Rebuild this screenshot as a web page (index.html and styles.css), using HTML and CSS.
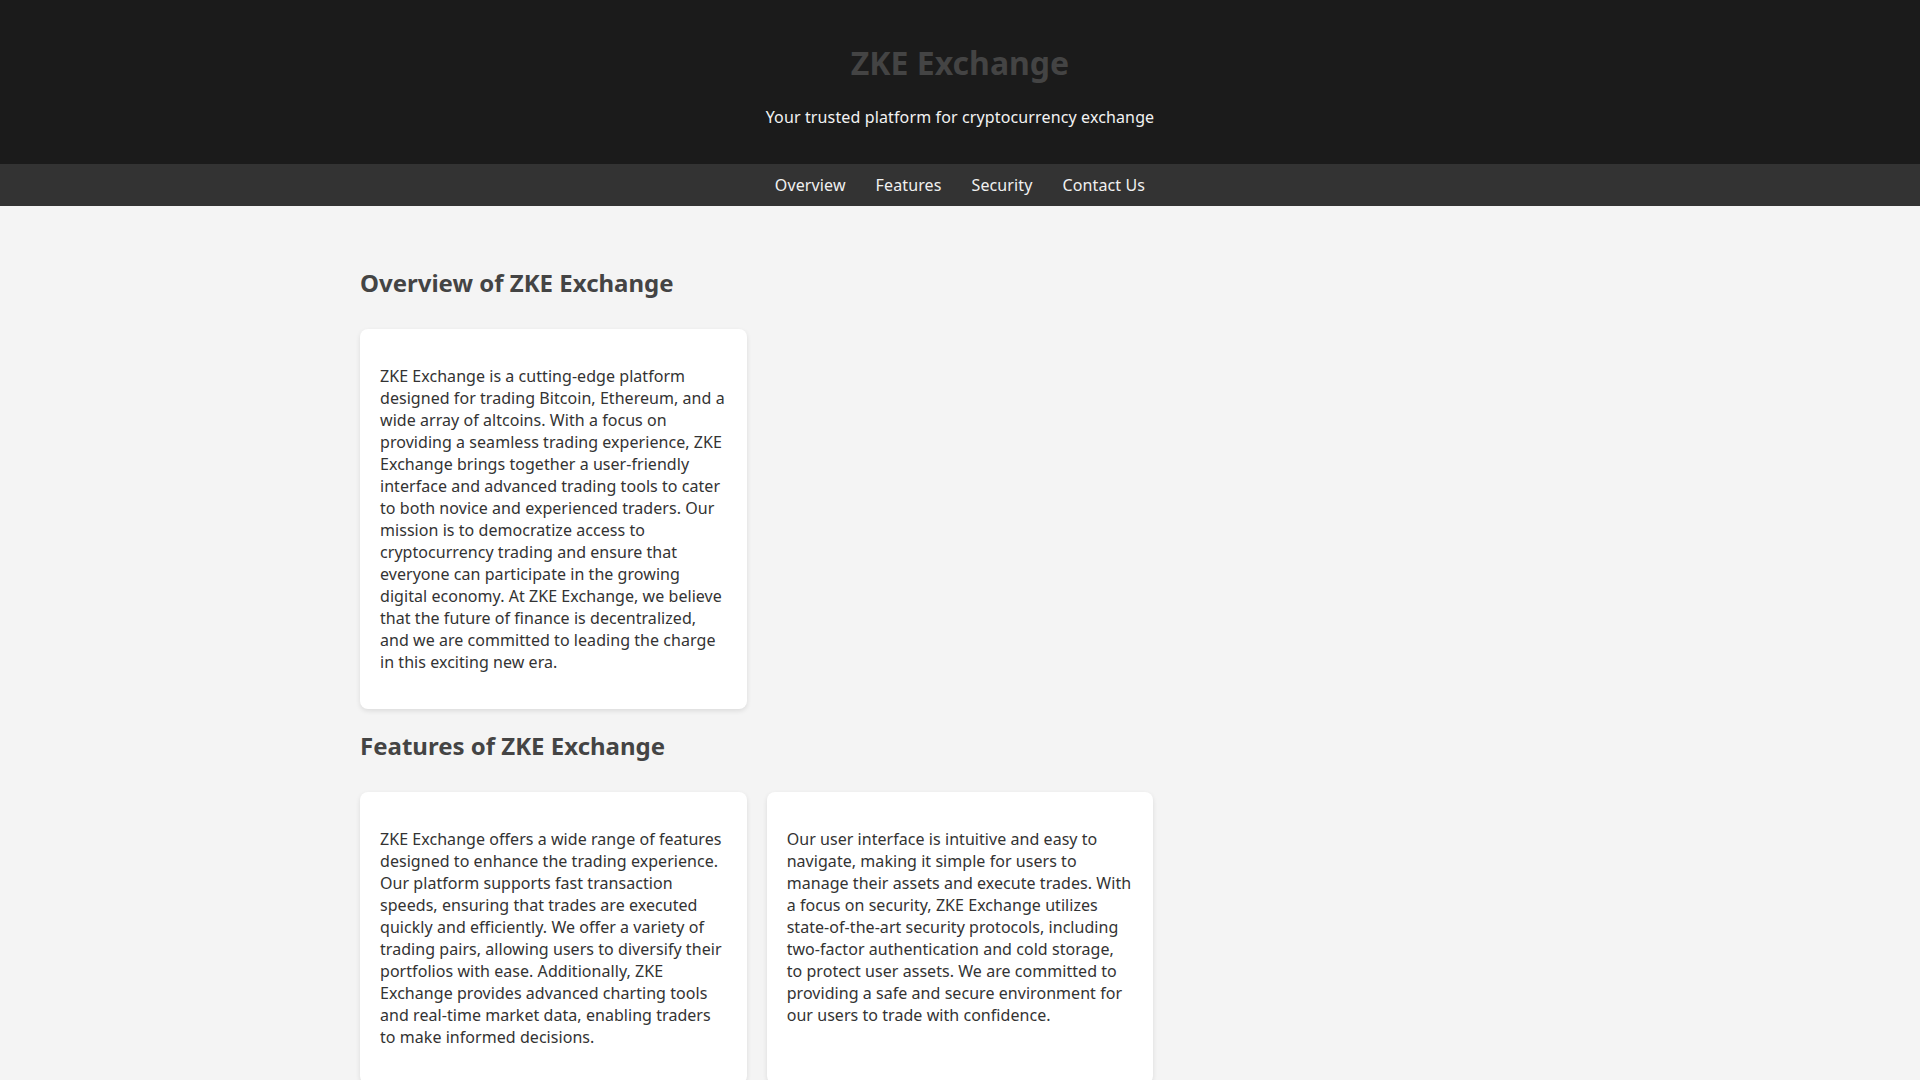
FILE: index.html
```html
<!DOCTYPE html>
<html lang="en">
<head>
<meta charset="utf-8">
<title>ZKE Exchange</title>
<link rel="stylesheet" href="styles.css">
</head>
<body>
<header class="site-header">
  <h1 class="site-title">ZKE Exchange</h1>
  <p class="site-tagline">Your trusted platform for cryptocurrency exchange</p>
</header>
<nav class="site-nav">
  <a href="#overview">Overview</a>
  <a href="#features">Features</a>
  <a href="#security">Security</a>
  <a href="#contact">Contact Us</a>
</nav>
<main class="container">
  <section id="overview" class="section">
    <h2 class="section-title">Overview of ZKE Exchange</h2>
    <div class="card-grid">
      <div class="card">
        <p>ZKE Exchange is a cutting-edge platform designed for trading Bitcoin, Ethereum, and a wide array of altcoins. With a focus on providing a seamless trading experience, ZKE Exchange brings together a user-friendly interface and advanced trading tools to cater to both novice and experienced traders. Our mission is to democratize access to cryptocurrency trading and ensure that everyone can participate in the growing digital economy. At ZKE Exchange, we believe that the future of finance is decentralized, and we are committed to leading the charge in this exciting new era.</p>
      </div>
    </div>
  </section>
  <section id="features" class="section">
    <h2 class="section-title">Features of ZKE Exchange</h2>
    <div class="card-grid">
      <div class="card">
        <p>ZKE Exchange offers a wide range of features designed to enhance the trading experience. Our platform supports fast transaction speeds, ensuring that trades are executed quickly and efficiently. We offer a variety of trading pairs, allowing users to diversify their portfolios with ease. Additionally, ZKE Exchange provides advanced charting tools and real-time market data, enabling traders to make informed decisions.</p>
      </div>
      <div class="card">
        <p>Our user interface is intuitive and easy to navigate, making it simple for users to manage their assets and execute trades. With a focus on security, ZKE Exchange utilizes state-of-the-art security protocols, including two-factor authentication and cold storage, to protect user assets. We are committed to providing a safe and secure environment for our users to trade with confidence.</p>
      </div>
    </div>
  </section>
  <section id="security" class="section">
    <h2 class="section-title">Security at ZKE Exchange</h2>
    <div class="card-grid">
      <div class="card">
        <p>Security is our top priority. ZKE Exchange keeps the majority of user funds in cold storage, uses multi-signature wallets, and performs regular security audits to keep your assets safe.</p>
      </div>
    </div>
  </section>
  <section id="contact" class="section">
    <h2 class="section-title">Contact Us</h2>
    <div class="card-grid">
      <div class="card">
        <p>Have questions? Our support team is available 24/7 to help you with any issues related to your account or trading.</p>
      </div>
    </div>
  </section>
</main>
</body>
</html>
```
FILE: styles.css
```css
html, body {
  margin: 0;
  padding: 0;
}

body {
  background: #f4f4f4;
  color: #333333;
  font-family: "Noto Sans", "Open Sans", sans-serif;
  font-size: 16px;
}

.site-header {
  background: #1b1b1b;
  padding: 20px;
  text-align: center;
}

.site-title {
  margin: 0.67em 0;
  font-size: 32px;
  font-weight: 700;
  color: #444444;
}

.site-tagline {
  margin: 16px 0;
  color: #f2f2f2;
  letter-spacing: 0.13px;
}

.site-nav {
  background: #333333;
  padding: 10px;
  display: flex;
  justify-content: center;
  gap: 30px;
}

.site-nav a {
  color: #f0f0f0;
  text-decoration: none;
  letter-spacing: 0.12px;
}

.container {
  max-width: 1200px;
  margin: 0 auto;
  padding: 40px 0;
}

.section-title {
  margin: 20px 0 30px;
  font-size: 24px;
  font-weight: 700;
  color: #444444;
}

.card-grid {
  display: grid;
  grid-template-columns: repeat(3, 1fr);
  gap: 20px;
}

.card {
  background: #ffffff;
  border-radius: 8px;
  padding: 20px;
  box-shadow: 0 2px 5px rgba(0, 0, 0, 0.1);
}

.card p {
  margin: 16px 0;
  line-height: 22px;
  letter-spacing: 0.05px;
}
```
